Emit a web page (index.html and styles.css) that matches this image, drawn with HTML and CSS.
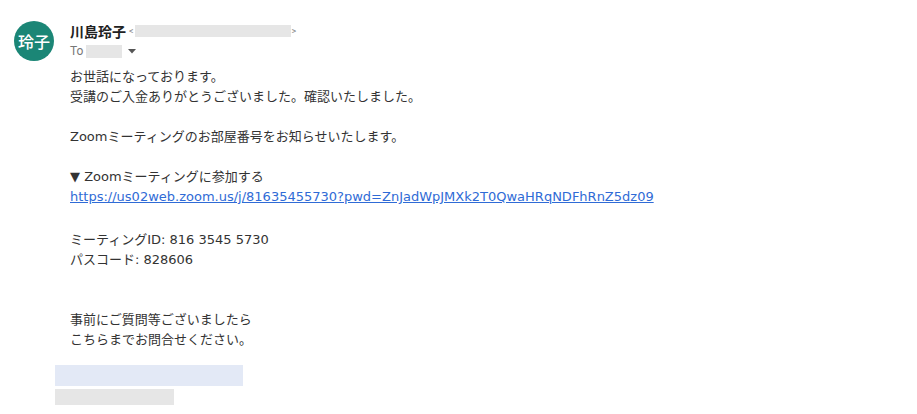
FILE: index.html
```html
<!DOCTYPE html>
<html lang="ja">
<head>
<meta charset="utf-8">
<link rel="stylesheet" href="styles.css">
</head>
<body>
<div class="mail">
  <div class="avatar">玲子</div>
  <div class="content">
    <div class="sender">
      <span class="name">川島玲子</span>
      <span class="addr">&lt;<span class="mask mask-addr"></span>&gt;</span>
    </div>
    <div class="to">
      <span>To</span>
      <span class="mask mask-to"></span>
      <svg class="caret" width="8" height="5" viewBox="0 0 8 5"><path d="M0 0h8L4 4.5z" fill="#555"/></svg>
    </div>
    <div class="body">
      <p>お世話になっております。<br>受講のご入金ありがとうございました。確認いたしました。</p>
      <p>Zoomミーティングのお部屋番号をお知らせいたします。</p>
      <p>▼ Zoomミーティングに参加する<br><a href="#">https://us02web.zoom.us/j/81635455730?pwd=ZnJadWpJMXk2T0QwaHRqNDFhRnZ5dz09</a></p>
      <p class="ids">ミーティングID: 816 3545 5730<br>パスコード: 828606</p>
      <p class="ask">事前にご質問等ございましたら<br>こちらまでお問合せください。</p>
    </div>
  </div>
</div>
<div class="signature">
  <div class="sig-blue"></div>
  <div class="sig-grey"></div>
</div>
</body>
</html>
```

FILE: styles.css
```css
html, body {
  margin: 0;
  padding: 0;
  background: #fff;
}
body {
  font-family: "DejaVu Sans", "Noto Sans CJK JP", sans-serif;
  color: #333;
}
.mail {
  display: flex;
  gap: 16px;
  padding: 20px 0 0 14px;
}
.avatar {
  width: 40px;
  height: 40px;
  border-radius: 50%;
  background: #1b8676;
  color: #fff;
  font-family: "Noto Sans CJK JP", sans-serif;
  font-size: 16px;
  font-weight: 500;
  display: flex;
  align-items: center;
  justify-content: center;
  flex: none;
  margin-top: 1px;
}
.content {
  display: flex;
  flex-direction: column;
}
.sender {
  display: flex;
  align-items: center;
  height: 20px;
  margin-top: 1px;
}
.name {
  font-family: "Noto Sans CJK JP", sans-serif;
  font-size: 14px;
  font-weight: bold;
  color: #222;
}
.addr {
  display: flex;
  align-items: center;
  font-family: Roboto, sans-serif;
  font-size: 9px;
  color: #888;
  margin-left: 3px;
}
.mask {
  display: inline-block;
  background: #e6e6e6;
}
.mask-addr {
  width: 156px;
  height: 12px;
  margin: 0 1px;
}
.to {
  display: flex;
  align-items: center;
  height: 18px;
  font-family: Roboto, sans-serif;
  font-size: 12px;
  color: #777;
  margin-top: 1px;
}
.mask-to {
  width: 36px;
  height: 13px;
  margin-left: 3px;
}
.caret {
  margin-left: 6px;
}
.body {
  margin-top: 7px;
  font-size: 13px;
  line-height: 20px;
}
.body p {
  margin: 0 0 20px;
}
.body a {
  color: #2f6bd6;
  text-decoration: underline;
}
.body p.ids {
  margin-top: 23px;
  margin-bottom: 40px;
}
.body p.ask {
  margin-bottom: 0;
}
.signature {
  padding: 15px 0 0 55px;
  display: flex;
  flex-direction: column;
  gap: 3px;
}
.sig-blue {
  width: 188px;
  height: 21px;
  background: #e3e9f6;
}
.sig-grey {
  width: 119px;
  height: 16px;
  background: #e6e6e6;
}
```
